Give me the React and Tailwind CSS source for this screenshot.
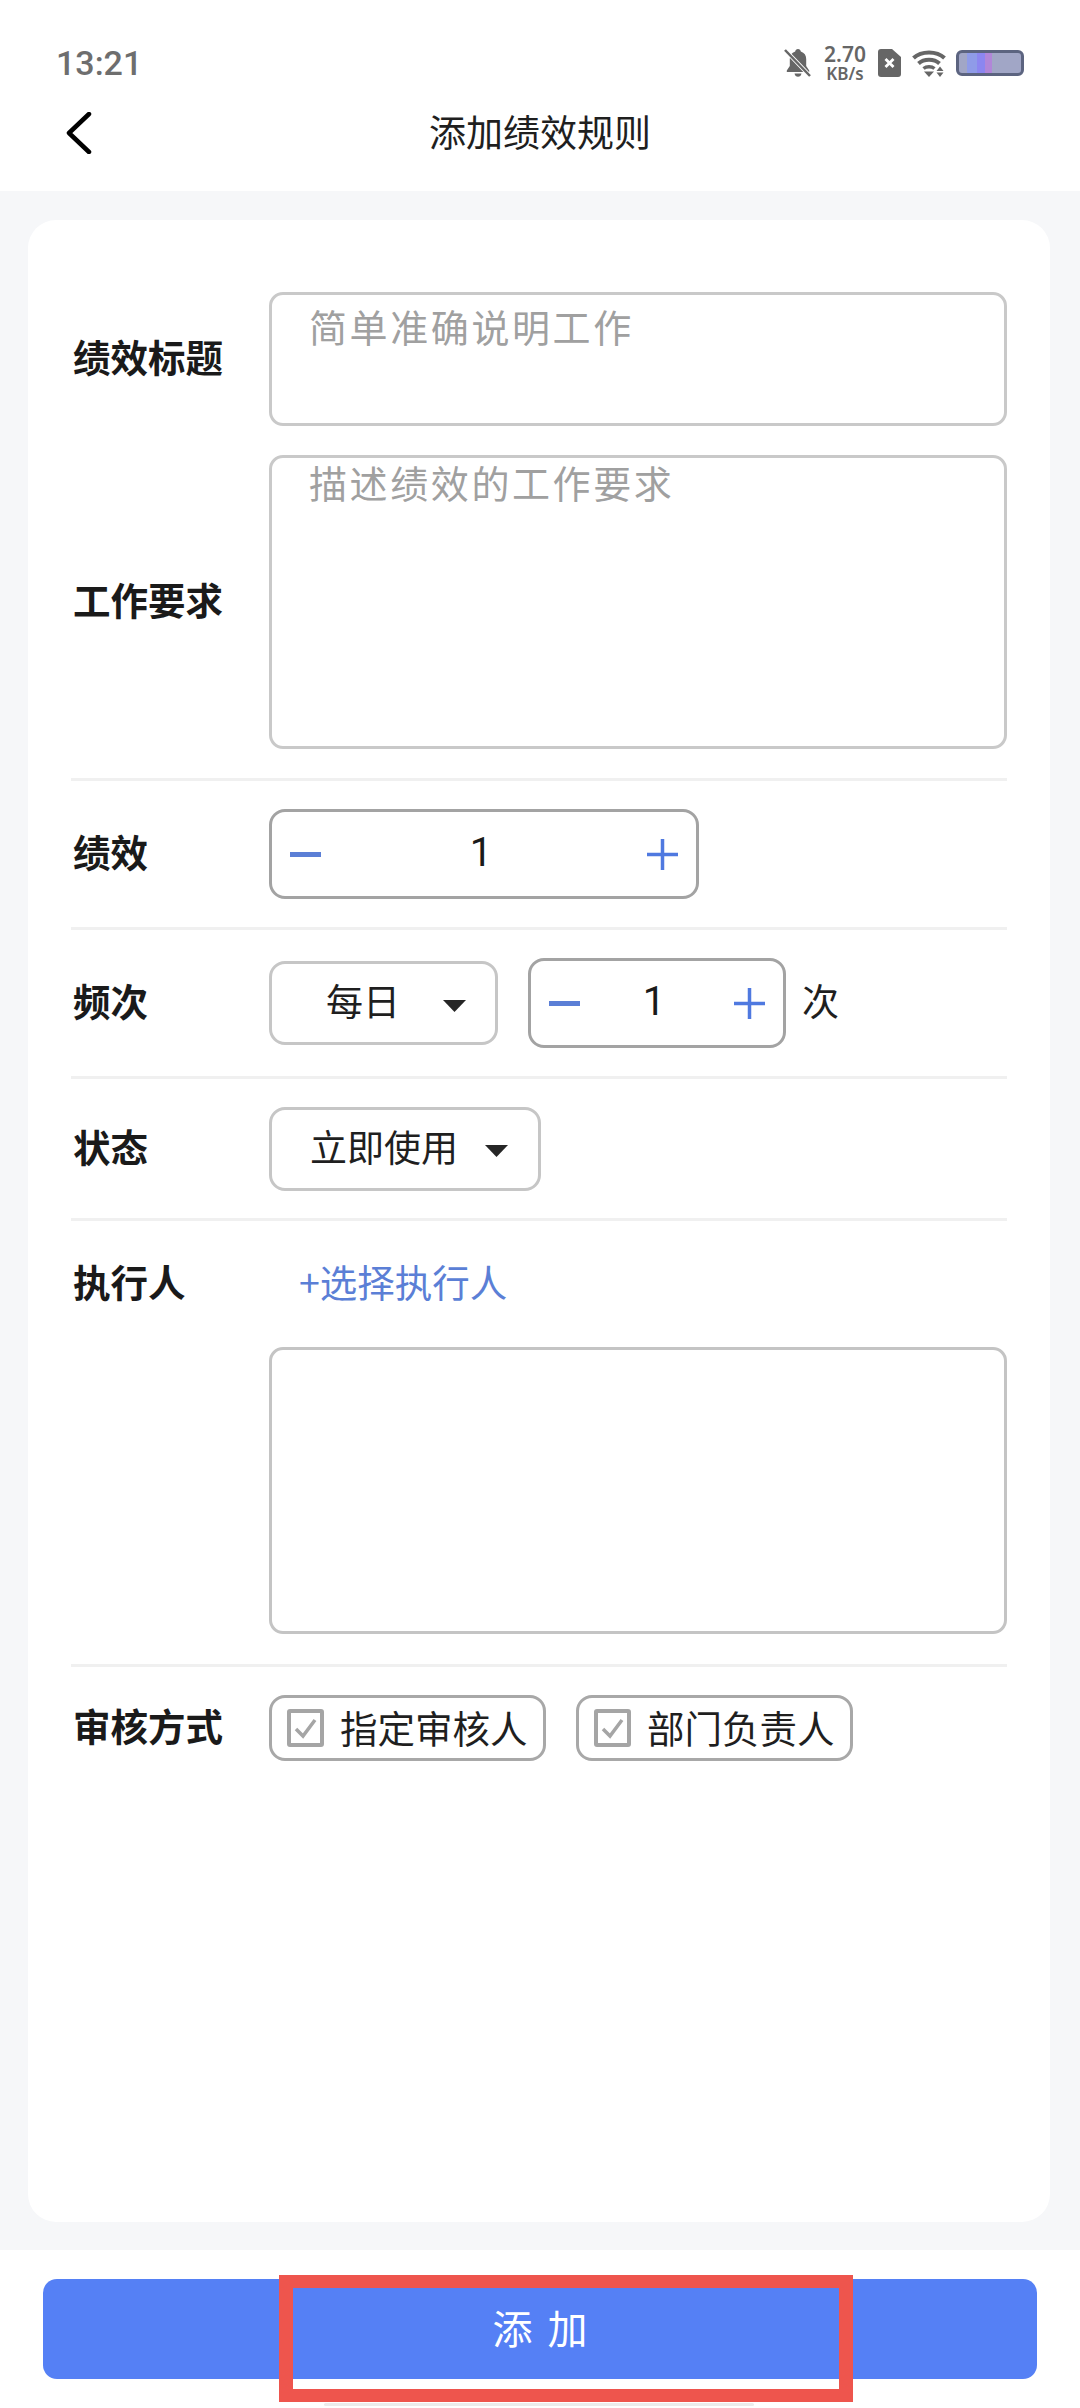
import React from 'react';

const CJK = { fontFamily: '"Noto Sans CJK SC", "Noto Sans", sans-serif' };

function BellOff() {
  return (
    <svg width="28" height="30" viewBox="0 0 28 30" fill="none">
      <path d="M14 1c-1.600 0-2.600 1-2.800 2.400C7.600 4.500 5.800 7.400 5.800 11v7l-3 4.500v1.500h22.400v-1.500l-3-4.500v-7c0-3.600-1.800-6.500-5.400-7.600C16.600 2 15.600 1 14 1z" fill="#666" />
      <path d="M10.500 25.500h7c-.3 2-1.700 3.300-3.500 3.300s-3.200-1.300-3.500-3.300z" fill="#666" />
      <path d="M1 2l25 26" stroke="#fff" strokeWidth="4" />
      <path d="M1 2l25 26" stroke="#666" strokeWidth="2.500" />
    </svg>
  );
}

function SimX() {
  return (
    <svg width="23" height="28" viewBox="0 0 23 28">
      <path d="M3 0h11l9 8v17a3 3 0 0 1-3 3H3a3 3 0 0 1-3-3V3a3 3 0 0 1 3-3z" fill="#666" />
      <path d="M7.500 10l8 8M15.500 10l-8 8" stroke="#fff" strokeWidth="2.800" />
    </svg>
  );
}

function Wifi() {
  return (
    <svg width="34" height="28" viewBox="0 0 34 28" fill="none">
      <path d="M1.500 9C9.500 1.500 24.500 1.500 32.500 9" stroke="#666" strokeWidth="4" />
      <path d="M6.500 14.500c5.500-5 15.500-5 21 0" stroke="#666" strokeWidth="4" />
      <path d="M11.500 19.500c3-2.400 8-2.400 11 0" stroke="#666" strokeWidth="3.500" />
      <path d="M12 22.500h10L17 28z" fill="#666" />
      <path d="M28 17.500l3.500 4.500h-7zM28 28l-3.500-4.500h7z" fill="#666" />
    </svg>
  );
}

function Minus() {
  return (
    <svg width="31" height="5" viewBox="0 0 31 5">
      <rect width="31" height="5" fill="#5b7fd6" />
    </svg>
  );
}

function Plus() {
  return (
    <svg width="31" height="31" viewBox="0 0 31 31">
      <path d="M0 15.500h31M15.500 0v31" stroke="#4f79e0" strokeWidth="3.500" />
    </svg>
  );
}

function Caret() {
  return (
    <svg width="23" height="12" viewBox="0 0 23 12" className="mt-[5px]">
      <path d="M0 0h23L11.500 12z" fill="#262626" />
    </svg>
  );
}

function Stepper({ className }) {
  return (
    <div className={`flex items-center justify-between rounded-[16px] border-[3px] border-[#a3a3a3] px-[18px] ${className}`}>
      <Minus />
      <span className="mr-[6px] pb-[3px] text-[40px] font-normal text-[#1a1a1a] [font-family:Roboto,sans-serif]">1</span>
      <Plus />
    </div>
  );
}

function Select({ label, className }) {
  return (
    <div className={`flex items-center rounded-[16px] border-[3px] border-[#c6c6c6] text-[37px] text-[#1f1f1f] ${className}`}>
      <span className="pb-[4px]">{label}</span>
      <Caret />
    </div>
  );
}

function Check({ label, className }) {
  return (
    <div className={`flex h-[66px] w-[277px] items-center gap-[16px] rounded-[16px] border-[3px] border-[#a8a8a8] pl-[15px] text-[37.500px] text-[#1f1f1f] ${className}`}>
      <span className="flex h-[38px] w-[37px] items-center justify-center rounded-[3px] border-[4px] border-[#a5a5a5]">
        <svg width="23" height="21" viewBox="0 0 23 21" fill="none">
          <path d="M2 11l7 7L21 2" stroke="#a5a5a5" strokeWidth="3.500" />
        </svg>
      </span>
      <span className="pb-[2px]">{label}</span>
    </div>
  );
}

function Label({ children }) {
  return <div className="w-[198px] shrink-0 pb-[5px] pl-[2px] text-[37.500px] font-bold text-[#1a1a1a]">{children}</div>;
}

function Row({ label, className, children }) {
  return (
    <div className={`flex items-center border-t-[3px] border-[#f0f0f0] ${className}`}>
      <Label>{label}</Label>
      {children}
    </div>
  );
}

export default function App() {
  return (
    <div className="relative flex h-[2408px] w-[1080px] flex-col overflow-hidden bg-white" style={CJK}>
      {/* status bar + title */}
      <header className="h-[191px] shrink-0 bg-white">
        <div className="mt-[46px] flex h-[34px] items-center pl-[56px] pr-[56px]">
          <span className="text-[34px] font-medium leading-none text-[#6e6e6e] [font-family:Roboto,sans-serif]">13:21</span>
          <div className="ml-auto flex items-center">
            <BellOff />
            <div className="ml-[11px] flex w-[44px] flex-col items-center font-semibold leading-none text-[#666] [font-family:'Noto_Sans',sans-serif]">
              <span className="text-[21px] leading-[21px]">2.70</span>
              <span className="text-[17px] leading-[17px]">KB/s</span>
            </div>
            <span className="ml-[11px] flex"><SimX /></span>
            <span className="ml-[11px] flex"><Wifi /></span>
            <div className="ml-[10px] flex h-[26px] w-[68px] overflow-hidden rounded-[6px] border-[3px] border-[#5c6480] bg-[#a1a6c6]">
              <span className="ml-[8px] h-full w-[10px] bg-[#8f9be8]" />
              <span className="h-full w-[8px] bg-[#8c86f0]" />
              <span className="h-full w-[7px] bg-[#b186d8]" />
            </div>
          </div>
        </div>
        <div className="relative mt-[20px] flex h-[66px] items-center justify-center pb-[2px] text-[37px] text-[#1f1f1f]">
          <svg width="26" height="42" viewBox="0 0 26 42" fill="none" className="absolute left-[66px] top-[12px]">
            <path d="M23 2L3 21l20 19" stroke="#000" strokeWidth="4.500" strokeLinecap="round" strokeLinejoin="round" />
          </svg>
          添加绩效规则
        </div>
      </header>

      {/* form */}
      <main className="flex-1 bg-[#f6f7f9] pl-[28px] pr-[30px] pt-[29px]">
        <div className="h-[2002px] rounded-[28px] bg-white px-[43px] pt-[72px]">
          <div className="flex h-[134px] items-center">
            <Label>绩效标题</Label>
            <div className="h-full flex-1 rounded-[14px] border-[3px] border-[#c9c9c9] pl-[37px] pt-[8px] text-[38px] leading-[46px] tracking-[2.600px] text-[#a0a0a0]">简单准确说明工作</div>
          </div>
          <div className="mt-[29px] flex h-[294px] items-center">
            <Label>工作要求</Label>
            <div className="h-full flex-1 rounded-[14px] border-[3px] border-[#c9c9c9] pl-[37px] pt-[1px] text-[38px] leading-[46px] tracking-[2.600px] text-[#a0a0a0]">描述绩效的工作要求</div>
          </div>

          <Row label="绩效" className="mt-[29px] h-[149px]">
            <Stepper className="h-[90px] w-[430px]" />
          </Row>
          <Row label="频次" className="h-[149px]">
            <Select label="每日" className="h-[84px] w-[229px] gap-[43px] pl-[54px]" />
            <Stepper className="ml-[30px] h-[90px] w-[258px]" />
            <span className="ml-[16px] pb-[4px] text-[37px] text-[#1f1f1f]">次</span>
          </Row>
          <Row label="状态" className="h-[142px]">
            <Select label="立即使用" className="h-[84px] w-[272px] gap-[27px] pl-[38px]" />
          </Row>

          <div className="h-[449px] border-y-[3px] border-[#f0f0f0]">
            <div className="flex h-[126px] items-center">
              <Label>执行人</Label>
              <span className="ml-[30px] pb-[5px] text-[37.500px] text-[#5b7fd6]">+选择执行人</span>
            </div>
            <div className="ml-[198px] h-[287px] rounded-[14px] border-[3px] border-[#c4c4c4]" />
          </div>

          <div className="flex items-center pt-[28px]">
            <Label>审核方式</Label>
            <Check label="指定审核人" />
            <Check label="部门负责人" className="ml-[30px]" />
          </div>
        </div>
      </main>

      {/* bottom button */}
      <footer className="h-[158px] shrink-0 bg-white px-[43px] pt-[29px]">
        <div className="flex h-[100px] items-center justify-center rounded-[14px] bg-[#5580f5] pb-[4px] pl-[15px] text-[40px] tracking-[15px] text-white">添加</div>
      </footer>

      {/* annotation rectangle drawn over the screenshot */}
      <div className="absolute left-[279px] top-[2275px] h-[127px] w-[574px] border-x-[14px] border-y-[13px] border-[#ee554d]" />
      <div className="absolute left-[293px] top-[2379px] h-[10px] w-[546px] bg-white" />
      <div className="absolute left-[324px] top-[2403px] h-[3px] w-[430px] rounded-full bg-[#ececec]" />
    </div>
  );
}
